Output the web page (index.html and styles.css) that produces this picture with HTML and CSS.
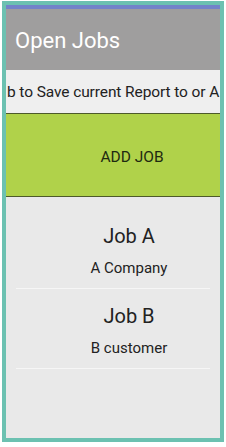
FILE: index.html
```html
<!DOCTYPE html>
<html lang="en">
<head>
  <meta charset="UTF-8" />
  <meta name="viewport" content="width=device-width, initial-scale=1.0" />
  <title>Open Jobs</title>
  <link rel="stylesheet" href="styles.css">
</head>
<body>

  <div class="phone">
    <div class="status-bar"></div>
    <div class="toolbar">
      <h1>Open Jobs</h1>
    </div>
    <div class="hint">
      <span>b to Save current Report to or A</span>
    </div>
    <button class="add-btn">ADD JOB</button>

    <ul class="job-list">
      <li>
        <span class="job-name">Job A</span>
        <span class="job-customer">A Company</span>
      </li>
      <li>
        <span class="job-name">Job B</span>
        <span class="job-customer">B customer</span>
      </li>
    </ul>
  </div>

</body>
</html>
```

FILE: styles.css
```css
* {
  margin: 0;
  padding: 0;
  box-sizing: border-box;
  font-family: Roboto, 'Noto Sans', sans-serif;
}

body {
  background: #fff;
}

.phone {
  margin: 1px 2px 0 2px;
  width: 222px;
  height: 441px;
  border: 4px solid #6cc1b1;
  background-color: #e9e9e9;
  display: flex;
  flex-direction: column;
  overflow: hidden;
}

.status-bar {
  height: 4px;
  background-color: #7383c9;
}

.toolbar {
  height: 61px;
  background-color: #9f9e9e;
  display: flex;
  align-items: center;
  padding-left: 9px;
  padding-top: 2px;
}

.toolbar h1 {
  color: #fff;
  font-size: 22px;
  font-weight: 400;
}

.hint {
  height: 44px;
  background-color: #efefef;
  border-bottom: 1px solid #4d5a2a;
  display: flex;
  align-items: center;
  padding-left: 1px;
  white-space: nowrap;
  overflow: hidden;
  font-size: 15.5px;
  letter-spacing: -0.1px;
  color: #222;
}

.add-btn {
  height: 83px;
  border: none;
  border-bottom: 1px solid #4d5a2a;
  background-color: #b0d24a;
  color: #1e2a10;
  font-size: 15.5px;
  padding: 4px 0 0 38px;
  cursor: pointer;
}

.job-list {
  list-style: none;
  padding-top: 12px;
}

.job-list li {
  display: flex;
  flex-direction: column;
  align-items: center;
  margin: 0 10px;
  padding: 15px 0 11px 32px;
  border-bottom: 1px solid #f6f6f6;
  color: #222;
}

.job-name {
  font-size: 20px;
  margin-bottom: 11px;
}

.job-customer {
  font-size: 15px;
}
```
